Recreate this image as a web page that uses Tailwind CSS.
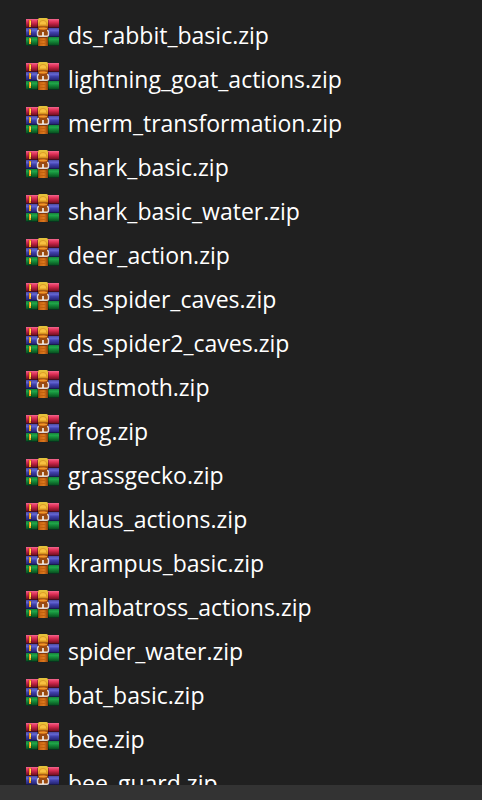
<!DOCTYPE html>
<html lang="en">
<head>
  <meta charset="UTF-8">
  <meta name="viewport" content="width=device-width, initial-scale=1.0">
  <title>Archives</title>
  <script src="https://cdn.jsdelivr.net/npm/@tailwindcss/browser@4"></script>
</head>
<body class="flex flex-col h-screen overflow-hidden bg-[#202020] text-white font-['Open_Sans','Noto_Sans',sans-serif]">
  <!-- archive icon, reused by every row -->
  <svg class="absolute w-0 h-0" aria-hidden="true">
    <defs>
      <linearGradient id="red" x1="0" y1="0" x2="0" y2="1">
        <stop offset="0" stop-color="#ee6a92"/><stop offset=".16" stop-color="#ed4870"/><stop offset=".4" stop-color="#d52b50"/>
        <stop offset=".65" stop-color="#a41b38"/><stop offset="1" stop-color="#5e0b1b"/>
      </linearGradient>
      <linearGradient id="blue" x1="0" y1="0" x2="0" y2="1">
        <stop offset="0" stop-color="#4a4aa0"/><stop offset=".25" stop-color="#6466d4"/><stop offset=".5" stop-color="#4040aa"/>
        <stop offset="1" stop-color="#1e1e66"/>
      </linearGradient>
      <linearGradient id="green" x1="0" y1="0" x2="0" y2="1">
        <stop offset="0" stop-color="#158039"/><stop offset=".25" stop-color="#20a84a"/><stop offset=".55" stop-color="#128034"/>
        <stop offset="1" stop-color="#06401a"/>
      </linearGradient>
      <linearGradient id="strap" x1="0" y1="0" x2="1" y2="0">
        <stop offset="0" stop-color="#8f430d"/><stop offset=".25" stop-color="#cf6914"/><stop offset=".6" stop-color="#dc7a1e"/>
        <stop offset="1" stop-color="#8d3d0c"/>
      </linearGradient>
      <linearGradient id="gold" x1="0" y1="0" x2="0" y2="1">
        <stop offset="0" stop-color="#e2c33c"/><stop offset=".5" stop-color="#eebb38"/><stop offset="1" stop-color="#d68b1c"/>
      </linearGradient>
      <symbol id="archive" viewBox="0 0 34 29">
        <rect x="0" y="1" width="33" height="9" fill="url(#red)"/>
        <rect x="0" y="10" width="33" height="9" fill="url(#blue)"/>
        <rect x="0" y="19" width="33" height="9" fill="url(#green)"/>
        <path d="M0 9.500h33M0 18.500h33M0 27.500h33" stroke="#101020" stroke-opacity=".4"/>
        <path d="M2.500 2v7M2.500 11v7M2.500 20v7M5.500 2v7M5.500 11v7M5.500 20v7" stroke="#000" stroke-opacity=".15"/>
        <path d="M4 2v7M4 11v6M4 20v6" stroke="#f39a18" stroke-width="2"/>
        <path d="M4.500 3v4M4.500 12v3M4.500 21v3" stroke="#ffe04a"/>
        <path d="M11.500 2v26M22.500 2v26" stroke="#000" stroke-opacity=".3"/>
        <rect x="12" y="1" width="10" height="27" fill="url(#strap)"/>
        <path d="M12 8V1.500Q12 0 13.500 0h7Q22 0 22 1.500V8z" fill="url(#gold)"/>
        <path d="M13.500 6.500V5Q13.500 2.500 17 2.500T20.500 5V6.500" fill="#f8c040" stroke="#d49422" stroke-width=".8"/>
        <path d="M12 8.500h10" stroke="#a86014"/>
        <path d="M13 10.500h8" stroke="#ef9a2c"/>
        <path d="M13 12h8v5h-8z" fill="#9a4a10"/>
        <path d="M13 12.500Q11.500 12.500 11.500 14V16.500Q11.500 18.300 13.500 18.300H20.500Q22.500 18.300 22.500 16.500V14Q22.500 12.500 21 12.500" fill="none" stroke="#dcd6d4" stroke-width="1.400"/>
        <path d="M17 14v4" stroke="#f4f4f4" stroke-width="1.600"/>
        <path d="M13 19.600h8" stroke="#7c340a"/>
        <path d="M14 22.500h6M14 25.500h6" stroke="#c4620f"/>
      </symbol>
    </defs>
  </svg>

  <main class="flex-1 min-h-0 overflow-hidden pt-[13px]">
    <ul id="files"></ul>
  </main>
  <footer class="h-[15px] shrink-0 bg-[#333333]"></footer>

  <script>
    const files = [
      "ds_rabbit_basic.zip",
      "lightning_goat_actions.zip",
      "merm_transformation.zip",
      "shark_basic.zip",
      "shark_basic_water.zip",
      "deer_action.zip",
      "ds_spider_caves.zip",
      "ds_spider2_caves.zip",
      "dustmoth.zip",
      "frog.zip",
      "grassgecko.zip",
      "klaus_actions.zip",
      "krampus_basic.zip",
      "malbatross_actions.zip",
      "spider_water.zip",
      "bat_basic.zip",
      "bee.zip",
      "bee_guard.zip"
    ];
    document.getElementById("files").innerHTML = files.map(name => `
      <li class="flex items-start h-11 pl-[26px] gap-2">
        <svg class="w-[34px] h-[29px] mt-[5px] shrink-0" aria-hidden="true"><use href="#archive"/></svg>
        <span class="text-[23px] leading-[44px] whitespace-nowrap">${name}</span>
      </li>`).join("");
  </script>
</body>
</html>
